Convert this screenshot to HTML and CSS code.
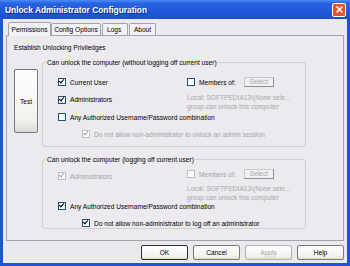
FILE: index.html
```html
<!DOCTYPE html>
<html lang="en">
<head>
  <meta charset="UTF-8" />
  <title>Unlock Administrator Configuration</title>
  <link rel="stylesheet" href="styles.css">
</head>
<body>
  <div class="window">
    <div class="titlebar">
      <span class="title">Unlock Administrator Configuration</span>
      <span class="close">
        <svg width="9" height="9" viewBox="0 0 9 9"><path d="M1.5 1.5 L7.5 7.5 M7.5 1.5 L1.5 7.5" stroke="#fff" stroke-width="1.6"/></svg>
      </span>
    </div>
    <div class="client">
      <div class="tabs">
        <span class="tab active">Permissions</span>
        <span class="tab t-config">Config Options</span>
        <span class="tab t-logs">Logs</span>
        <span class="tab t-about">About</span>
      </div>
      <div class="panel">
        <div class="caption">Establish Unlocking Priviledges</div>
        <div class="layout">
          <button class="btn test">Test</button>

          <div class="group g1">
            <div class="legend">Can unlock the computer (without logging off current user)</div>
            <div class="cols">
              <div class="col-left">
                <label class="check r-first"><span class="box on"></span>Current User</label>
                <label class="check"><span class="box on"></span>Administrators</label>
              </div>
              <div class="col-right">
                <div class="members">
                  <label class="check"><span class="box"></span>Members of:</label>
                  <span class="select">Select</span>
                </div>
                <div class="note">Local: SOFTPEDIA13\(None sele...<br>group can unlock this computer</div>
              </div>
            </div>
            <label class="check any"><span class="box"></span>Any Authorized Username/Password combination</label>
            <label class="check sub dim"><span class="box on"></span>Do not allow non-administrator to unlock an admin session</label>
          </div>

          <div class="group g2">
            <div class="legend">Can unlock the computer (logging off current user)</div>
            <div class="cols">
              <div class="col-left">
                <label class="check dim"><span class="box on"></span>Administrators</label>
              </div>
              <div class="col-right">
                <div class="members">
                  <label class="check dim"><span class="box"></span>Members of:</label>
                  <span class="select">Select</span>
                </div>
                <div class="note">Local: SOFTPEDIA13\(None sele...<br>group can unlock this computer</div>
              </div>
            </div>
            <label class="check any"><span class="box on"></span>Any Authorized Username/Password combination</label>
            <label class="check sub"><span class="box on"></span>Do not allow non-administrator to log off an administrator</label>
          </div>
        </div>
      </div>
      <div class="buttons">
        <button class="btn default">OK</button>
        <button class="btn">Cancel</button>
        <button class="btn off">Apply</button>
        <button class="btn">Help</button>
      </div>
    </div>
  </div>
</body>
</html>
```

FILE: styles.css
```css
body {
  margin: 0;
  font-family: 'Liberation Sans', Arial, sans-serif;
  font-size: 6.6px;
  color: #000;
}
.window {
  width: 350px;
  height: 266px;
  background: #1d55d6;
  display: flex;
  flex-direction: column;
}
.titlebar {
  height: 19px;
  flex: none;
  display: flex;
  align-items: center;
  justify-content: space-between;
  padding: 0 4px 0 5px;
  background: linear-gradient(#4a8cf5 0, #2863e0 18%, #2158dc 60%, #1c4fd0 100%);
}
.title {
  color: #fff;
  font-weight: bold;
  font-size: 8.4px;
  text-shadow: 1px 1px 0 #0a2a80;
}
.close {
  width: 14px;
  height: 14px;
  box-sizing: border-box;
  border: 1px solid #fff;
  border-radius: 2px;
  background: #e0562f;
  display: flex;
  align-items: center;
  justify-content: center;
}
.close svg {
  display: block;
}
.client {
  flex: 1;
  margin: 0 3px 3px;
  background: #ebe9ed;
  padding: 3px;
  display: flex;
  flex-direction: column;
}
.tabs {
  display: flex;
  align-items: flex-end;
  height: 13px;
  padding-left: 2px;
}
.tab {
  height: 12px;
  line-height: 11px;
  text-align: center;
  border: 1px solid #a0a6a8;
  border-bottom: none;
  border-radius: 2px 2px 0 0;
  background: #f2f1f4;
  margin-right: 1px;
  box-sizing: border-box;
}
.tab.active {
  width: 43px;
  height: 14px;
  line-height: 13px;
  margin: 0 0 -1px 0;
  position: relative;
}
.t-config {
  width: 50px;
}
.t-logs {
  width: 26px;
  text-align: left;
  padding-left: 4px;
}
.t-about {
  width: 27px;
}
.panel {
  height: 206px;
  flex: none;
  border: 1px solid #a0a6a8;
  background: #eceaee;
  padding: 7px 0 0 7px;
  box-sizing: border-box;
}
.caption {
  height: 10px;
  line-height: 10px;
  margin-bottom: 9px;
}
.layout {
  display: grid;
  grid-template-columns: 24px 264px;
  column-gap: 4px;
  row-gap: 12px;
}
.btn {
  font-family: inherit;
  font-size: 6.6px;
  color: #000;
  background: linear-gradient(#fefefe, #f2f1ee 80%, #dcdad4);
  border: 1px solid #7a7a7a;
  border-radius: 2px;
  padding: 0;
}
.test {
  height: 64px;
  margin-top: 7px;
  align-self: start;
}
.group {
  border: 1px solid #d0d0c8;
  border-radius: 3px;
  padding: 0 0 6px 15px;
}
.g2 {
  grid-column: 2;
  padding-bottom: 0;
}
.legend {
  width: fit-content;
  margin: -5px 0 0 -12px;
  padding: 0 1px;
  height: 9px;
  line-height: 9px;
  background: #eceaee;
  white-space: nowrap;
}
.cols {
  display: grid;
  grid-template-columns: 129px 1fr;
  margin-top: 6px;
}
.g2 .cols {
  margin-top: 3px;
}
.check {
  display: flex;
  align-items: center;
  height: 17px;
  white-space: nowrap;
}
.r-first {
  height: 18px;
}
.g1 .any {
  height: 12px;
}
.g1 .sub {
  height: 12px;
  margin-top: 5px;
}
.g2 .col-left .check {
  height: 14px;
  margin-top: 2px;
}
.g2 .any {
  height: 8px;
}
.g2 .sub {
  height: 10px;
  margin-top: 8px;
}
.box {
  width: 6px;
  height: 6px;
  border: 1px solid #1c5180;
  background: #fff;
  margin-right: 4px;
  flex: none;
  position: relative;
}
.box.on::after {
  content: "";
  position: absolute;
  left: 1px;
  top: -1px;
  width: 2px;
  height: 4px;
  border-right: 1.5px solid #000;
  border-bottom: 1.5px solid #000;
  transform: rotate(40deg);
}
.dim {
  color: #a3a3a3;
}
.dim .box {
  border-color: #c0c0c0;
}
.dim .box.on::after {
  border-color: #a8a8a8;
}
.sub {
  padding-left: 24px;
}
.members {
  display: flex;
  align-items: center;
  height: 14px;
}
.g1 .members {
  margin-top: 2px;
}
.members .check {
  height: 14px;
  width: 57px;
}
.select {
  width: 28px;
  height: 8px;
  line-height: 8px;
  text-align: center;
  color: #a8a8a8;
  border: 1px solid #c8c8c8;
  border-right-color: #909090;
  border-bottom-color: #909090;
  background: #f0eff2;
}
.note {
  color: #a8a8a8;
  line-height: 9px;
  margin-top: 4px;
}
.g2 .note {
  margin-top: 3px;
}
.buttons {
  display: flex;
  justify-content: flex-end;
  gap: 5px;
  margin-top: 4px;
}
.buttons .btn {
  width: 47px;
  height: 15px;
}
.default {
  border-color: #303030;
}
.off {
  color: #a8a8a8;
  border-color: #b0b0b0;
}
```
